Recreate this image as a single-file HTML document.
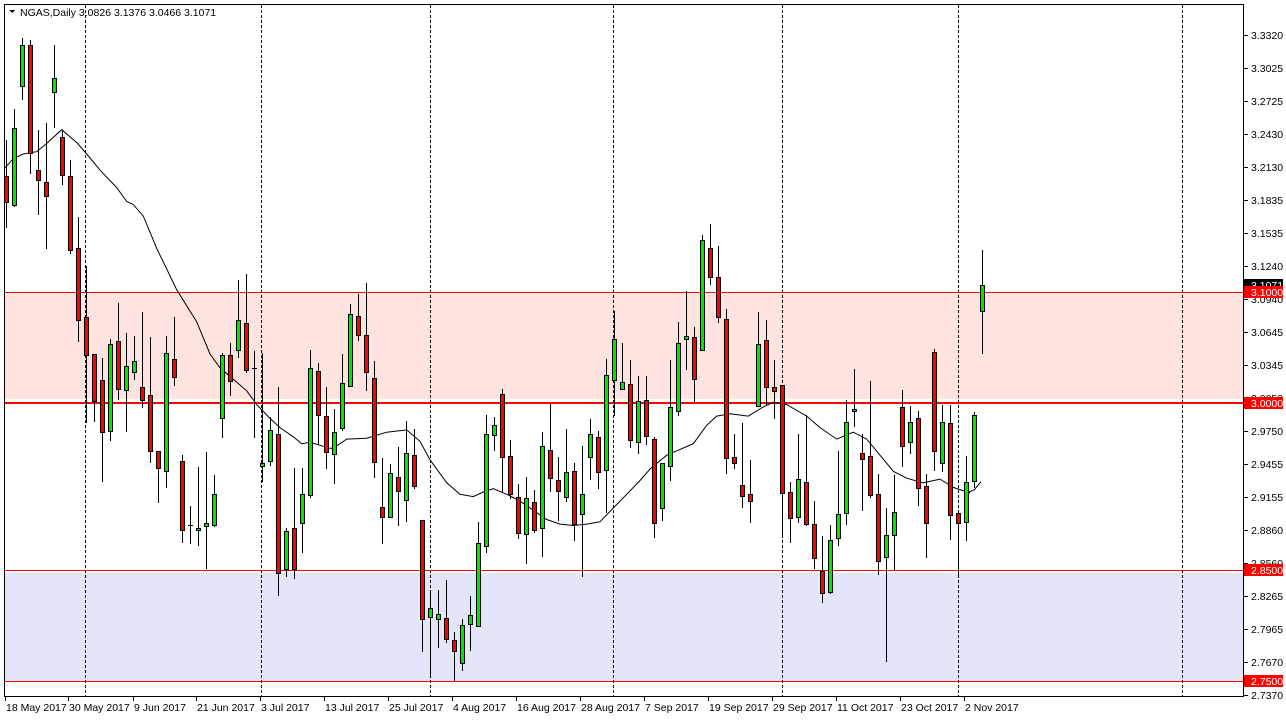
<!DOCTYPE html>
<html><head><meta charset="utf-8"><style>
html,body{margin:0;padding:0;background:#fff;width:1286px;height:720px;overflow:hidden}
svg{display:block}
text{font-family:"Liberation Sans",sans-serif;font-size:10.5px;fill:#000}
</style></head><body>
<svg id="s" width="1286" height="720" xmlns="http://www.w3.org/2000/svg" shape-rendering="crispEdges"></svg>
<script>
var S=2.175;
var D=[
[0,383,440,305,493],[1,278,445,238,448],[1,98,187,83,215],[0,98,332,88,376],[0,369,392,282,465],
[0,395,427,268,540],[1,169,201,98,276],[0,297,380,285,400],[0,383,543,348,550],[0,539,697,473,742],
[0,689,772,578,918],[0,770,872,770,915],[0,826,940,778,1047],[1,748,937,738,957],[0,741,846,660,868],
[1,796,848,725,938],[1,786,810,730,825],[0,842,870,679,885],[0,860,980,732,1005],[0,981,1018,980,1092],
[1,768,1025,730,1060],[0,780,820,690,838],[0,1002,1152,990,1178],[2,1141,1141,1100,1180],[1,1149,1153,1015,1186],
[1,1137,1145,984,1235],[1,1075,1142,1034,1145],[1,773,909,767,950],[0,773,829,745,860],[1,697,761,610,776],
[0,702,805,597,810],[2,800,800,764,950],[1,1007,1013,768,1047],[1,935,1003,908,1012],[0,943,1247,841,1295],
[1,1155,1238,1148,1253],[0,1149,1238,1017,1258],[1,1075,1138,1017,1201],[1,800,1077,762,1080],[0,806,902,789,965],
[0,905,983,842,1017],[1,940,988,890,1050],[1,832,930,770,935],[1,683,840,662,840],[0,688,728,640,740],
[0,728,810,616,848],[0,822,1004,785,1038],[0,1103,1125,997,1180],[1,1029,1125,1010,1125],[0,1038,1067,972,1142],
[1,986,1088,915,1134],[0,990,1056,932,1062],[0,1131,1347,1131,1415],[1,1323,1342,1290,1466],[1,1335,1346,1283,1408],
[0,1345,1390,1261,1396],[0,1392,1416,1374,1480],[1,1360,1443,1347,1458],[1,1337,1357,1297,1413],[1,1181,1361,1135,1361],
[1,945,1187,902,1200],[1,924,947,906,978],[0,858,993,845,1070],[0,992,1075,958,1083],[0,1080,1160,1052,1170],
[1,1083,1161,1037,1224],[0,1092,1153,1066,1158],[1,970,1148,940,1210],[0,979,1039,878,1068],[0,1044,1069,994,1132],
[1,1027,1080,932,1090],[0,1025,1140,1008,1175],[1,1075,1117,971,1252],[1,945,995,912,1042],[0,951,1026,937,1062],
[1,815,1022,780,1113],[1,737,826,676,902],[1,830,847,746,847],[0,835,957,782,972],[1,873,961,817,986],
[0,870,948,817,966],[0,955,1137,950,1168],[1,1008,1104,1008,1131],[1,885,1013,784,1044],[1,746,893,701,902],
[1,731,737,634,802],[0,733,824,712,874],[1,521,762,511,762],[0,539,603,488,617],[0,602,690,535,701],
[0,694,996,671,1028],[0,994,1008,943,1018],[0,1055,1078,921,1102],[0,1075,1089,1000,1135],[1,748,882,678,882],
[0,739,842,697,878],[0,842,850,782,910],[0,837,1072,837,1162],[0,1070,1126,1048,1178],[1,1042,1124,945,1136],
[0,1049,1140,903,1141],[0,1140,1213,1090,1235],[0,1242,1290,1165,1310],[1,1175,1287,1141,1290],[1,1118,1170,980,1186],
[1,918,1115,870,1140],[1,889,895,803,927],[0,985,998,945,1110],[0,992,1077,828,1080],[0,1075,1220,1032,1248],
[1,1164,1212,1105,1437],[1,1113,1164,1034,1238],[0,885,970,848,1014],[1,918,962,882,986],[0,910,1062,893,1099],
[0,1058,1137,1031,1212],[0,765,981,760,1022],[1,918,1006,880,1025],[0,920,1120,880,1172],[0,1116,1137,1116,1255],
[1,1048,1135,991,1175],[1,902,1046,897,1060],[1,619,677,543,767]
];
var MA=[[0,[[15,365],[40,345],[70,335],[110,330],[140,312],[185,282],[230,310],[260,335],[300,370],[350,408],[380,438],[400,445],[430,470],[470,540],[530,630],[590,700],[630,770],[660,800],[700,825],[740,850],[770,880],[810,910],[840,930],[880,950],[905,965],[930,962],[990,975]]],
[320,[[40,975],[80,955],[140,953],[200,940],[260,935],[300,960],[330,1000],[380,1050],[420,1075],[460,1080],[490,1070],[520,1063],[560,1075],[600,1090],[640,1110],[680,1130],[720,1140],[760,1143],[800,1140],[840,1135],[880,1105],[920,1075],[960,1045],[990,1020]]],
[640,[[30,1020],[80,990],[160,965],[200,925],[230,905],[270,900],[325,905],[370,885],[400,875],[440,880],[500,905],[540,930],[590,955],[640,940],[680,955],[720,990],[760,1025],[800,1040],[850,1050],[900,1042],[940,1060],[990,1072]]],
[956,[[30,1073],[55,1065],[75,1048]]]];
var h='';
function r(x,y,w,hh,f){h+='<rect x="'+x+'" y="'+y+'" width="'+w+'" height="'+hh+'" fill="'+f+'"/>';}
function Y(v){return Math.round(v/S);}
// zones
r(4,292,1239,107,'#ffe3df');
r(4,573,1239,108,'#e3e5f8');
// dashed verticals
[85,261,430,613,782,958,1182].forEach(function(x){h+='<line x1="'+(x+0.5)+'" y1="5" x2="'+(x+0.5)+'" y2="697" stroke="#000" stroke-dasharray="3,2"/>';});
// horizontal lines
h+='<line x1="4" y1="292.5" x2="1243" y2="292.5" stroke="#f00"/>';
h+='<line x1="4" y1="570.5" x2="1243" y2="570.5" stroke="#f00"/>';
h+='<line x1="4" y1="681.5" x2="1243" y2="681.5" stroke="#f00"/>';
r(4,402,1239,2,'#f00');
// MA
var pts=[];MA.forEach(function(s){s[1].forEach(function(p){pts.push((s[0]+p[0]/3).toFixed(1)+','+(p[1]/S).toFixed(1));});});
h+='<polyline points="'+pts.join(' ')+'" fill="none" stroke="#000" stroke-width="1" shape-rendering="auto"/>';
// candles
D.forEach(function(c,i){var x=6+8*i;var wt=Y(c[3]),wb=Y(c[4]),bt=Y(c[1]),bb=Y(c[2]);
r(x,wt,1,wb-wt+1,'#000');
if(c[0]==2){r(x-2,bt,5,1,'#000');return;}
if(bb-bt<2)bb=bt+2;
r(x-2,bt,5,bb-bt+1,'#000');r(x-1,bt+1,3,bb-bt-1,c[0]?'#00e600':'#f00');});
// mask left
r(0,0,4,720,'#fff');
// frame
h+='<rect x="4.5" y="4.5" width="1239" height="692" fill="none" stroke="#000"/>';
// axis labels
var labs=['3.3320','3.3025','3.2725','3.2430','3.2130','3.1835','3.1535','3.1240','3.0940','3.0645','3.0345','3.0050','2.9750','2.9455','2.9155','2.8860','2.8560','2.8265','2.7965','2.7670','2.7370'];
labs.forEach(function(t,i){var y=Math.round(34.5+i*33.0);r(1244,y,4,1,'#000');h+='<text x="1251" y="'+(y+4)+'">'+t+'</text>';});
function box(y,t,f){r(1244,y-6,39,12,f);h+='<text x="1251" y="'+(y+4)+'" style="fill:#fff">'+t+'</text>';}
box(285,'3.1071','#000');box(292,'3.1000','#f00');box(403,'3.0000','#f00');box(570,'2.8500','#f00');box(681,'2.7500','#f00');
// dates
var ds=['18 May 2017','30 May 2017','9 Jun 2017','21 Jun 2017','3 Jul 2017','13 Jul 2017','25 Jul 2017','4 Aug 2017','16 Aug 2017','28 Aug 2017','7 Sep 2017','19 Sep 2017','29 Sep 2017','11 Oct 2017','23 Oct 2017','2 Nov 2017'];
var dx=[5,68,133,196,260,324,388,452,516,580,644,708,772,836,900,964];
ds.forEach(function(t,i){r(dx[i],697,1,4,'#000');h+='<text x="'+(dx[i]+1)+'" y="711">'+t+'</text>';});
// header
h+='<polygon points="9,10 15,10 12,13" fill="#000"/>';
h+='<text x="20" y="16">NGAS,Daily  3.0826 3.1376 3.0466 3.1071</text>';
document.getElementById('s').innerHTML=h;
</script>
</body></html>
